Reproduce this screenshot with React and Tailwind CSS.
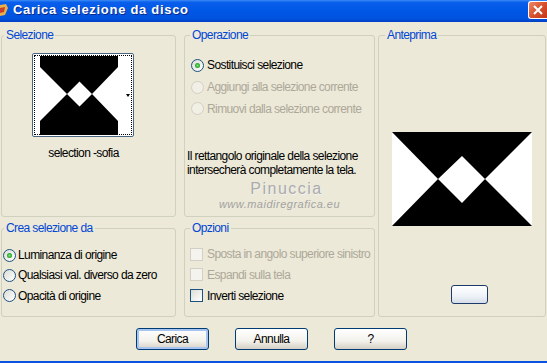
import React from 'react'

function Radio({ checked, disabled }) {
  return (
    <span
      className={
        'flex h-[13px] w-[13px] shrink-0 items-center justify-center rounded-full border ' +
        (disabled
          ? 'border-[#D2D0C4] bg-[#F1EFE6]'
          : 'border-[#1C5180] bg-[linear-gradient(135deg,#DCDCD7,#FFFFFF)]')
      }
    >
      {checked && (
        <span className="h-[5px] w-[5px] rounded-full bg-[radial-gradient(circle,#7BE07A_0%,#21A121_70%)]" />
      )}
    </span>
  )
}

function Check({ disabled }) {
  return (
    <span
      className={
        'block h-[13px] w-[13px] shrink-0 border ' +
        (disabled
          ? 'border-[#D2D0C4] bg-[#F4F3EE]'
          : 'border-[#1C5180] bg-[linear-gradient(135deg,#DCDCD7,#FFFFFF)]')
      }
    />
  )
}

function Group({ label, legendClass, className, children }) {
  return (
    <fieldset className={'rounded-[3px] border border-[#D0D0BF] ' + className}>
      <legend className={'px-[2px] leading-[14px] text-[#0046D5] ' + legendClass}>{label}</legend>
      {children}
    </fieldset>
  )
}

function Button({ children, primary, className = '' }) {
  return (
    <button
      className={
        'h-[22px] w-[73px] rounded-[3px] border border-[#003C74] bg-[linear-gradient(to_bottom,#FFFFFF,#F3F2EC_60%,#D6D0C5)] text-black ' +
        (primary ? 'shadow-[inset_0_0_0_2px_#A8C4F0] ' : '') +
        className
      }
    >
      {children}
    </button>
  )
}

function Thumb() {
  return (
    <svg width="78" height="79" viewBox="0 0 78 79" className="block">
      <rect width="78" height="79" fill="#fff" />
      <polygon points="0,0 78,0 78,11 52,38 39.5,25.5 27,38 0,11" fill="#000" />
      <polygon points="0,65 27,38 39.5,50.5 52,38 78,65 78,79 0,79" fill="#000" />
    </svg>
  )
}

function Preview() {
  return (
    <svg width="140" height="94" viewBox="0 0 140 94" className="block">
      <rect width="140" height="94" fill="#fff" />
      <polygon points="0,0 140,0 93,47 70,24 46,47" fill="#000" />
      <polygon points="0,94 46,47 70,71 93,47 140,94" fill="#000" />
    </svg>
  )
}

export default function App() {
  return (
    <div className="flex h-[363px] w-[547px] flex-col overflow-hidden whitespace-nowrap bg-[#ECE9D8] font-['Liberation_Sans',sans-serif] text-[12px] tracking-[-0.6px] text-black">
      {/* title bar */}
      <div className="flex h-[22px] shrink-0 items-center bg-[linear-gradient(to_bottom,#3D8BF5_0%,#0A5FEB_10%,#0058E6_45%,#0052DE_85%,#0040C4_100%)]">
        <svg width="10" height="14" viewBox="0 0 10 14" className="mb-[2px] shrink-0">
          <path d="M0 2 L6 1 L8 5 L5 12 L0 13 Z" fill="#E8B04A" />
          <path d="M0 5 L5 4 L4 9 L0 10 Z" fill="#C8402A" />
        </svg>
        <span className="ml-[3px] mb-[2px] text-[13px] font-bold tracking-[0.7px] text-white [text-shadow:1px_1px_0_#0A2A8A]">
          Carica selezione da disco
        </span>
        <div className="ml-auto mb-[3px] flex h-[18px] w-[19px] items-center justify-center rounded-l-[3px] border border-r-0 border-white bg-[linear-gradient(135deg,#F08A6A,#D8512E_50%,#C2381A)]">
          <svg width="10" height="10" viewBox="0 0 10 10">
            <path d="M1 1 L9 9 M9 1 L1 9" stroke="#fff" strokeWidth="2" />
          </svg>
        </div>
      </div>

      {/* groups */}
      <div className="mt-[6px] flex pl-[1px]">
        <div className="flex w-[175px] flex-col gap-[4px]">
          <Group label="Selezione" legendClass="ml-[2px]" className="h-[189px]">
            <div className="ml-[30px] mt-[11px] h-[84px] w-[102px] rounded-[2px] border border-[#4A6584] bg-white p-px">
              <div className="flex h-full border border-dotted border-black">
                <div className="ml-[5px]">
                  <Thumb />
                </div>
                <div className="flex flex-1 items-center justify-end pr-[1px]">
                  <span className="h-0 w-0 border-x-[2.5px] border-t-[3px] border-x-transparent border-t-black" />
                </div>
              </div>
            </div>
            <div className="mt-[9px] w-[163px] text-center leading-[15px]">selection -sofia</div>
          </Group>
          <Group label="Crea selezione da" legendClass="ml-[2px]" className="h-[96px]">
            <div className="mt-[10px] flex flex-col pl-[1px]">
              <div className="flex h-[20px] items-center gap-[2px]">
                <Radio checked />
                <span>Luminanza di origine</span>
              </div>
              <div className="flex h-[20px] items-center gap-[2px]">
                <Radio />
                <span>Qualsiasi val. diverso da zero</span>
              </div>
              <div className="flex h-[21px] items-center gap-[2px]">
                <Radio />
                <span>Opacità di origine</span>
              </div>
            </div>
          </Group>
        </div>

        <div className="ml-[8px] flex w-[191px] flex-col gap-[4px]">
          <Group label="Operazione" legendClass="ml-[5px]" className="h-[189px]">
            <div className="mt-[12px] flex flex-col pl-[6px]">
              <div className="flex h-[22px] items-center gap-[3px]">
                <Radio checked />
                <span>Sostituisci selezione</span>
              </div>
              <div className="flex h-[22px] items-center gap-[3px] text-[#ACA899]">
                <Radio disabled />
                <span>Aggiungi alla selezione corrente</span>
              </div>
              <div className="flex h-[21px] items-center gap-[3px] text-[#ACA899]">
                <Radio disabled />
                <span>Rimuovi dalla selezione corrente</span>
              </div>
            </div>
            <p className="ml-[2px] mt-[30px] leading-[14px]">
              Il rettangolo originale della selezione
              <br />
              intersecherà completamente la tela.
            </p>
            <div className="mt-[3px] flex flex-col items-center">
              <span className="ml-[14px] text-[16px] leading-[18px] tracking-[1.5px] text-[#ABABAB] [text-shadow:1px_1px_0_#F2F2F2]">
                Pinuccia
              </span>
              <span className="text-[11px] italic leading-[13px] tracking-[0.5px] text-[#A2A2A2]">
                www.maidiregrafica.eu
              </span>
            </div>
          </Group>
          <Group label="Opzioni" legendClass="ml-[5px]" className="h-[96px]">
            <div className="mt-[9px] flex flex-col pl-[5px]">
              <div className="flex h-[20px] items-center gap-[4px] text-[#ACA899]">
                <Check disabled />
                <span>Sposta in angolo superiore sinistro</span>
              </div>
              <div className="flex h-[21px] items-center gap-[4px] text-[#ACA899]">
                <Check disabled />
                <span>Espandi sulla tela</span>
              </div>
              <div className="flex h-[21px] items-center gap-[4px]">
                <Check />
                <span>Inverti selezione</span>
              </div>
            </div>
          </Group>
        </div>

        <Group label="Anteprima" legendClass="ml-[6px]" className="ml-[3px] h-[289px] w-[168px]">
          <div className="mt-[90px] flex justify-center">
            <Preview />
          </div>
          <div className="ml-[72px] mt-[59px] h-[19px] w-[37px] rounded-[3px] border border-[#1C3A6A] bg-[linear-gradient(to_bottom,#FFFFFF,#EEF2F8_60%,#D6DDE8)]" />
        </Group>
      </div>

      {/* buttons */}
      <div className="mt-[11px] flex gap-[26px] pl-[136px]">
        <Button primary>Carica</Button>
        <Button>Annulla</Button>
        <Button>?</Button>
      </div>

      <div className="flex-1" />
      <div className="h-[2px] shrink-0 bg-[#0A52E0]" />
    </div>
  )
}
